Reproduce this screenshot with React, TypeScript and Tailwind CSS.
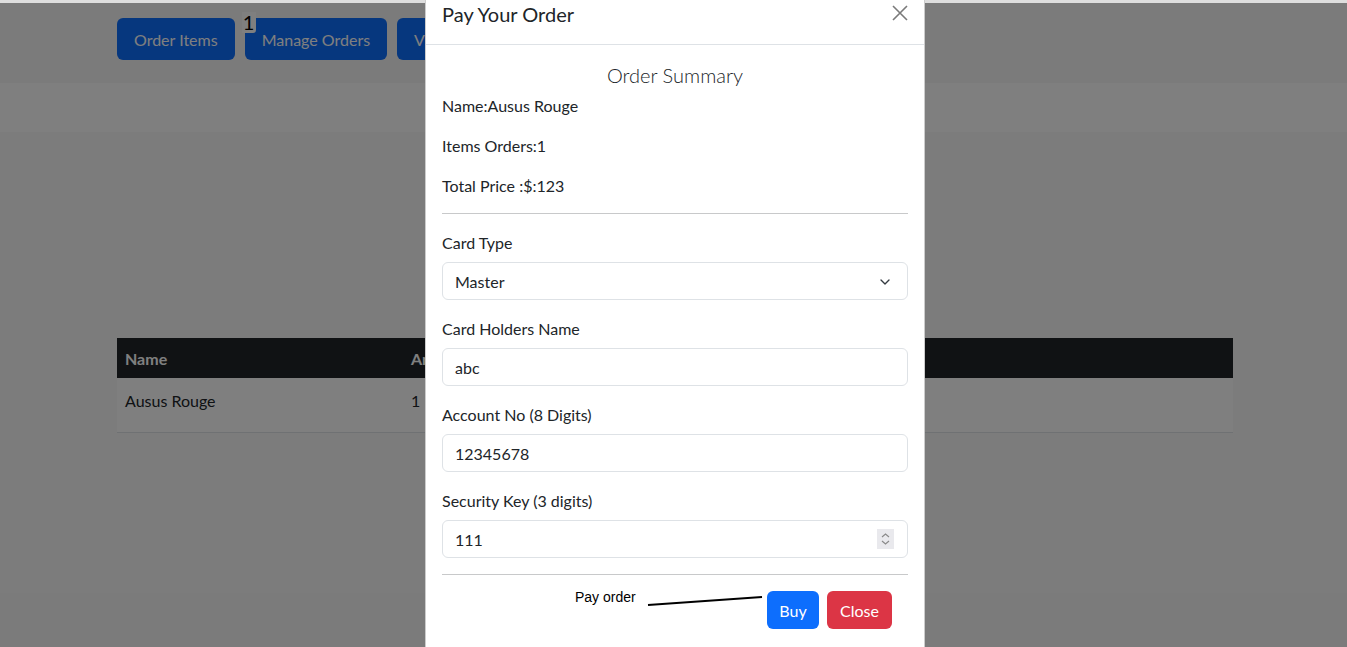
import { ChevronDown } from "lucide-react";

const field = "h-[38px] w-full rounded-[6px] border border-[#dee2e6] bg-white px-3 pt-[2px] text-[16px] text-[#212529] flex items-center";

function Field({ label, children }: { label: string; children: React.ReactNode }) {
  return (
    <div className="mb-[17px]">
      <div className="mb-[7px] text-[16px] leading-6 text-[#212529]">{label}</div>
      {children}
    </div>
  );
}

export default function App() {
  return (
    <div className="h-[647px] overflow-hidden bg-white font-['Lato',sans-serif]">
      {/* browser edge */}
      <div className="h-[3px] bg-[#dedede]" />

      <div className="relative h-[644px]">
        {/* Page under the modal */}
        <div className="flex h-[80px] gap-[10px] bg-[#f6f6f6] pl-[117px] pt-[15px]">
          <button className="h-[42px] rounded-[6px] bg-[#0d6efd] px-[17px] pt-[2px] text-[16px] text-white">Order Items</button>
          <div className="relative">
            <button className="h-[42px] rounded-[6px] bg-[#0d6efd] px-[17px] pt-[2px] text-[16px] text-white">Manage Orders</button>
            <span className="absolute left-[-3px] top-[-6px] h-[21px] w-[14px] rounded-br-[3px] bg-white text-center text-[20px] leading-[21px] text-black">1</span>
          </div>
          <button className="h-[42px] rounded-[6px] bg-[#0d6efd] px-[17px] pt-[2px] text-[16px] text-white">View Orders</button>
        </div>
        <div className="h-[49px] bg-white" />
        <div className="h-[461px] bg-[#f8f8f8] pt-[206px]">
          <div className="ml-[117px] w-[1116px]">
            <div className="flex h-[40px] items-center bg-[#212529] pt-[1px] text-[16px] font-bold text-white">
              <div className="w-[286px] px-2">Name</div>
              <div className="w-[200px] px-2">Am</div>
              <div className="flex-1 px-2" />
            </div>
            <div className="flex h-[55px] items-start border-b border-[#dee2e6] bg-white text-[16px] text-[#212529]">
              <div className="w-[286px] px-2 pt-[11px]">Ausus Rouge</div>
              <div className="w-[200px] px-2 pt-[11px]">1</div>
              <div className="w-[200px] px-2 pt-[11px]" />
              <div className="w-[140px] px-2 pt-[10px]">
                <button className="h-[34px] w-[113px] rounded-[6px] bg-[#dc3545]" />
              </div>
            </div>
          </div>
        </div>
        <div className="h-[54px] bg-[#f6f6f6]" />

        {/* Backdrop */}
        <div className="absolute inset-0 bg-black/50" />

        {/* Modal */}
        <div className="absolute left-[425px] top-[-18px] w-[500px] rounded-[8px] border border-black/20 bg-white">
          <div className="flex h-[59px] items-center justify-between border-b border-[#dee2e6] px-4 pb-[2px]">
            <h5 className="text-[20px] leading-6 text-[#212529]">Pay Your Order</h5>
            <svg width="16" height="16" viewBox="0 0 16 16" className="mb-[2px]">
              <path d="M1 1 L15 15 M15 1 L1 15" stroke="#7a7a7a" strokeWidth="1.6" />
            </svg>
          </div>

          <div className="px-4 pb-[60px] pt-4">
            <div className="mb-[5px] text-center text-[20px] font-light leading-[28px] text-[#212529]">Order Summary</div>
            <p className="mb-4 text-[16px] leading-6 text-[#212529]">Name:Ausus Rouge</p>
            <p className="mb-4 text-[16px] leading-6 text-[#212529]">Items Orders:1</p>
            <p className="text-[16px] leading-6 text-[#212529]">Total Price :$:123</p>
            <hr className="mb-[17px] mt-[15px] border-[#c8c9ca]" />

            <Field label="Card Type">
              <div className={`${field} justify-between`}>
                <span>Master</span>
                <ChevronDown size={16} strokeWidth={2} className="mr-[2px] text-[#343a40]" />
              </div>
            </Field>
            <Field label="Card Holders Name">
              <div className={field}>abc</div>
            </Field>
            <Field label="Account No (8 Digits)">
              <div className={field}>12345678</div>
            </Field>
            <div>
              <div className="mb-[7px] text-[16px] leading-6 text-[#212529]">Security Key (3 digits)</div>
              <div className={`${field} justify-between`}>
                <span>111</span>
                <span className="mb-[2px] mr-[1px] flex h-[20px] w-[17px] items-center justify-center bg-[#e9e9ed]">
                  <svg width="9" height="14" viewBox="0 0 9 14">
                    <path d="M1 5 L4.5 2 L8 5 M1 9 L4.5 12 L8 9" fill="none" stroke="#8a8a8a" strokeWidth="1.2" />
                  </svg>
                </span>
              </div>
            </div>
            <hr className="my-4 border-[#c8c9ca]" />

            <div className="relative flex h-[38px] justify-end gap-2 pr-4">
              <span className="absolute left-[133px] top-[-3px] font-['Liberation_Sans',sans-serif] text-[14px] leading-[18px] text-black">Pay order</span>
              <svg className="absolute left-[204px] top-[4px]" width="120" height="12" viewBox="0 0 120 12">
                <path d="M2 10 L116 2" stroke="#000" strokeWidth="2" />
              </svg>
              <button className="h-[38px] w-[52px] rounded-[6px] bg-[#0d6efd] pt-[2px] text-[16px] text-white">Buy</button>
              <button className="h-[38px] w-[65px] rounded-[6px] bg-[#dc3545] pt-[2px] text-[16px] text-white">Close</button>
            </div>
          </div>
        </div>
      </div>
    </div>
  );
}
